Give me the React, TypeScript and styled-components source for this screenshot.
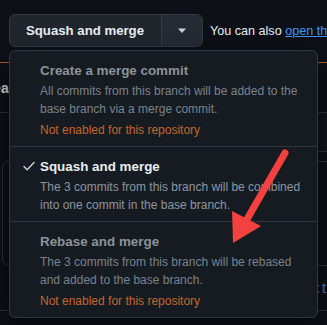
import * as React from 'react'
import styled, {createGlobalStyle} from 'styled-components'

const GlobalStyle = createGlobalStyle`
  html, body {
    margin: 0;
    padding: 0;
    background: #0d1117;
  }
  body {
    font-family: "Liberation Sans", Arial, sans-serif;
    -webkit-font-smoothing: antialiased;
  }
`

const Page = styled.div`
  position: relative;
  width: 327px;
  height: 325px;
  overflow: hidden;
  background: #0d1117;
  color: #e6edf3;
`

const MergeRow = styled.div`
  display: flex;
  align-items: center;
  gap: 7px;
  padding: 14px 0 0 9px;
  white-space: nowrap;
`

const ButtonGroup = styled.div`
  display: flex;
  flex-shrink: 0;
  height: 31px;
  border: 1px solid #363b42;
  border-radius: 6px;
  overflow: hidden;
  background: #21262d;
`

const MainButton = styled.button`
  display: flex;
  align-items: center;
  padding: 0 16px;
  width: 151px;
  border: none;
  background: #21262d;
  color: #e6edf3;
  font: 700 13.2px "Liberation Sans", Arial, sans-serif;
`

const CaretButton = styled.button`
  display: flex;
  align-items: center;
  justify-content: center;
  width: 41px;
  border: none;
  border-left: 1px solid #363b42;
  background: #262b33;
  color: #c9d1d9;
`

const Hint = styled.span`
  font-size: 12.6px;
  color: #e6edf3;
  a {
    color: #4493f8;
    text-decoration: underline;
  }
`

const Underlay = styled.div`
  margin-top: 15px;
  border-top: 1px solid #c4622a;
`

const FileRow = styled.div`
  display: flex;
  align-items: center;
  height: 49px;
  border-bottom: 1px solid #30363d;
  font-size: 14px;
  font-weight: 700;
  color: #e6edf3;
  white-space: nowrap;
  span {
    margin-left: -17px;
  }
`

const SideStrip = styled.div`
  height: 38px;
  margin-left: 318px;
  border-bottom: 1px solid #30363d;
  background: #10151c;
`

const BoxRow = styled.div`
  display: flex;
  justify-content: space-between;
  margin-top: 9px;
`

const OutlineBox = styled.div`
  width: 60px;
  height: 102px;
  margin-left: 2px;
  border: 1px solid #30363d;
  border-radius: 6px;
`

const RightLines = styled.div`
  width: 9px;
  height: 103px;
  border-top: 1px solid #30363d;
  border-bottom: 1px solid #30363d;
`

const TailRow = styled.div`
  display: flex;
  justify-content: flex-end;
  align-items: center;
  gap: 2px;
  height: 44px;
  padding-right: 1px;
  border-bottom: 1px solid #30363d;
  font-size: 14px;
  color: #8d96a0;
  a {
    color: #4493f8;
  }
`

const Menu = styled.div`
  position: absolute;
  top: 50px;
  left: 9px;
  width: 307px;
  border: 1px solid #30363d;
  border-radius: 6px;
  background: #161b22;
  box-shadow: 0 8px 24px rgba(1, 4, 9, 0.75);
  overflow: hidden;
`

const Item = styled.div<{$last?: boolean}>`
  position: relative;
  padding: 10px 12px 7px 30px;
  border-bottom: ${p => (p.$last ? 'none' : '1px solid #30363d')};
  white-space: nowrap;
`

const Title = styled.div<{$disabled?: boolean}>`
  font-size: 13.4px;
  font-weight: 700;
  line-height: 20px;
  color: ${p => (p.$disabled ? '#8b929a' : '#e6edf3')};
`

const Desc = styled.div<{$disabled?: boolean}>`
  margin-top: 1px;
  font-size: 12px;
  line-height: 18px;
  color: ${p => (p.$disabled ? '#7a828b' : '#8d96a0')};
`

const Notice = styled.div`
  margin-top: 3px;
  font-size: 12px;
  line-height: 18px;
  color: #c5662a;
`

const Check = styled.svg`
  position: absolute;
  left: 13px;
  top: 13px;
`

const Arrow = styled.svg`
  position: absolute;
  left: 0;
  top: 0;
  pointer-events: none;
`

type MergeOption = {
  title: string
  desc: string[]
  disabled?: boolean
  selected?: boolean
}

const options: MergeOption[] = [
  {
    title: 'Create a merge commit',
    desc: ['All commits from this branch will be added to the', 'base branch via a merge commit.'],
    disabled: true,
  },
  {
    title: 'Squash and merge',
    desc: ['The 3 commits from this branch will be combined', 'into one commit in the base branch.'],
    selected: true,
  },
  {
    title: 'Rebase and merge',
    desc: ['The 3 commits from this branch will be rebased', 'and added to the base branch.'],
    disabled: true,
  },
]

const App: React.FC = () => {
  return (
    <Page>
      <GlobalStyle/>
      <MergeRow>
        <ButtonGroup>
          <MainButton>Squash and merge</MainButton>
          <CaretButton>
            <svg width="10" height="6" viewBox="0 0 10 6">
              <path d="M1 0.5h8L5 5z" fill="#c9d1d9"/>
            </svg>
          </CaretButton>
        </ButtonGroup>
        <Hint>You can also <a>open this in GitHub Desktop</a></Hint>
      </MergeRow>

      <Underlay>
        <FileRow><span>Read</span></FileRow>
        <SideStrip/>
        <BoxRow>
          <OutlineBox/>
          <RightLines/>
        </BoxRow>
        <TailRow><span>:</span><a>t</a></TailRow>
      </Underlay>

      <Menu>
        {options.map((o, i) => (
          <Item key={o.title} $last={i === options.length - 1}>
            {o.selected &&
              <Check width="12" height="12" viewBox="0 0 12 12">
                <path d="M1 6.5l3.2 3.2L11 2.5" fill="none" stroke="#c9d1d9" strokeWidth="1.4"
                      strokeLinecap="round" strokeLinejoin="round"/>
              </Check>
            }
            <Title $disabled={o.disabled}>{o.title}</Title>
            <Desc $disabled={o.disabled}>
              {o.desc.map(line => <div key={line}>{line}</div>)}
            </Desc>
            {o.disabled && <Notice>Not enabled for this repository</Notice>}
          </Item>
        ))}
      </Menu>

      {/*annotation*/}
      <Arrow width="327" height="325" viewBox="0 0 327 325">
        <line x1="285" y1="153" x2="246" y2="221" stroke="#f2413f" strokeWidth="7" strokeLinecap="round"/>
        <path d="M232 211L261 226L233 243Z" fill="#f2413f"/>
      </Arrow>
    </Page>
  )
}

export default App
